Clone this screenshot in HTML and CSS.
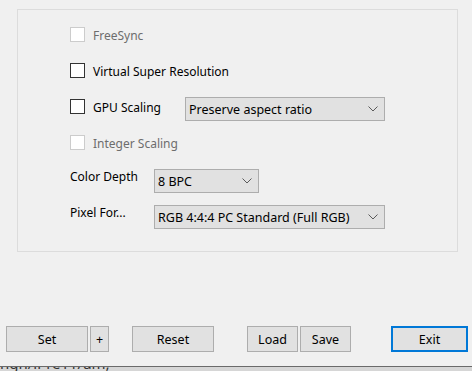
FILE: index.html
```html
<!DOCTYPE html>
<html lang="en">
<head>
    <meta charset="UTF-8">
    <title>Display Settings</title>
    <link rel="stylesheet" href="styles.css">
</head>
<body>
    <div class="window">
        <div class="group-box">
            <div class="row">
                <span class="check disabled"></span>
                <span class="label disabled">FreeSync</span>
            </div>
            <div class="row">
                <span class="check"></span>
                <span class="label">Virtual Super Resolution</span>
            </div>
            <div class="row">
                <span class="check"></span>
                <span class="label gpu-label">GPU Scaling</span>
                <div class="combo combo-scaling">
                    <span>Preserve aspect ratio</span>
                    <svg class="chevron" width="10" height="6" viewBox="0 0 10 6"><path d="M0.5 0.5 L5 5 L9.5 0.5" fill="none" stroke="#5a5a5a" stroke-width="1"/></svg>
                </div>
            </div>
            <div class="row">
                <span class="check disabled"></span>
                <span class="label disabled">Integer Scaling</span>
            </div>
            <div class="row">
                <span class="field-label">Color Depth</span>
                <div class="combo combo-depth">
                    <span>8 BPC</span>
                    <svg class="chevron" width="10" height="6" viewBox="0 0 10 6"><path d="M0.5 0.5 L5 5 L9.5 0.5" fill="none" stroke="#5a5a5a" stroke-width="1"/></svg>
                </div>
            </div>
            <div class="row">
                <span class="field-label">Pixel For...</span>
                <div class="combo combo-pixel">
                    <span>RGB 4:4:4 PC Standard (Full RGB)</span>
                    <svg class="chevron" width="10" height="6" viewBox="0 0 10 6"><path d="M0.5 0.5 L5 5 L9.5 0.5" fill="none" stroke="#5a5a5a" stroke-width="1"/></svg>
                </div>
            </div>
        </div>

        <div class="button-bar">
            <button class="btn btn-set">Set</button>
            <button class="btn btn-plus">+</button>
            <button class="btn btn-reset">Reset</button>
            <button class="btn btn-load">Load</button>
            <button class="btn btn-save">Save</button>
            <button class="btn btn-exit">Exit</button>
        </div>
    </div>
    <div class="behind">
        <span>ngn/ir1e11/am;</span>
    </div>
</body>
</html>
```

FILE: styles.css
```css
body {
    margin: 0;
    padding: 0;
    background-color: #f0f0f0;
    font-family: "Noto Sans", "Open Sans", sans-serif;
    font-size: 12px;
    color: #000;
    overflow: hidden;
}

.window {
    height: 366px;
    padding-top: 9px;
    box-sizing: border-box;
}

.group-box {
    margin-left: 17px;
    width: 441px;
    height: 243px;
    box-sizing: border-box;
    border: 1px solid #dcdcdc;
    padding: 15px 0 0 52px;
    display: flex;
    flex-direction: column;
    gap: 12px;
}

.row {
    display: flex;
    align-items: flex-start;
    height: 24px;
}

.check {
    width: 15px;
    height: 15px;
    box-sizing: border-box;
    border: 1px solid #333;
    background-color: #fff;
    margin-top: 2px;
}

.check.disabled {
    border-color: #cccccc;
}

.label {
    margin-left: 8px;
    line-height: 18px;
    margin-top: 2px;
}

.label.disabled {
    color: #6d6d6d;
}

.gpu-label {
    width: 92px;
}

.field-label {
    width: 84px;
    line-height: 16px;
    margin-top: 0;
}

.combo {
    height: 24px;
    box-sizing: border-box;
    border: 1px solid #adadad;
    background-color: #e1e1e1;
    display: flex;
    align-items: center;
    justify-content: space-between;
    padding: 0 6px 0 3px;
    font-size: 12.5px;
}

.combo-scaling {
    width: 200px;
}

.combo-depth {
    width: 105px;
}

.combo-pixel {
    width: 231px;
}

.chevron {
    display: block;
}

.button-bar {
    display: flex;
    margin: 74px 0 0 6px;
}

.btn {
    height: 26px;
    box-sizing: border-box;
    border: 1px solid #adadad;
    background-color: #e1e1e1;
    font-family: inherit;
    font-size: 12.5px;
    color: #000;
    padding: 0;
}

.btn-set { width: 82px; }
.btn-plus { width: 19px; margin-left: 2px; }
.btn-reset { width: 82px; margin-left: 23px; }
.btn-load { width: 51px; margin-left: 33px; }
.btn-save { width: 51px; margin-left: 2px; }

.btn-exit {
    width: 77px;
    margin-left: 40px;
    border: 2px solid #0078d7;
}

.behind {
    height: 5px;
    border-top: 1px solid #6a6a6a;
    background-color: #d6d6d6;
    overflow: hidden;
}

.behind span {
    display: block;
    margin-top: -11px;
    font-size: 15px;
    line-height: 15px;
    color: #333;
}
```
